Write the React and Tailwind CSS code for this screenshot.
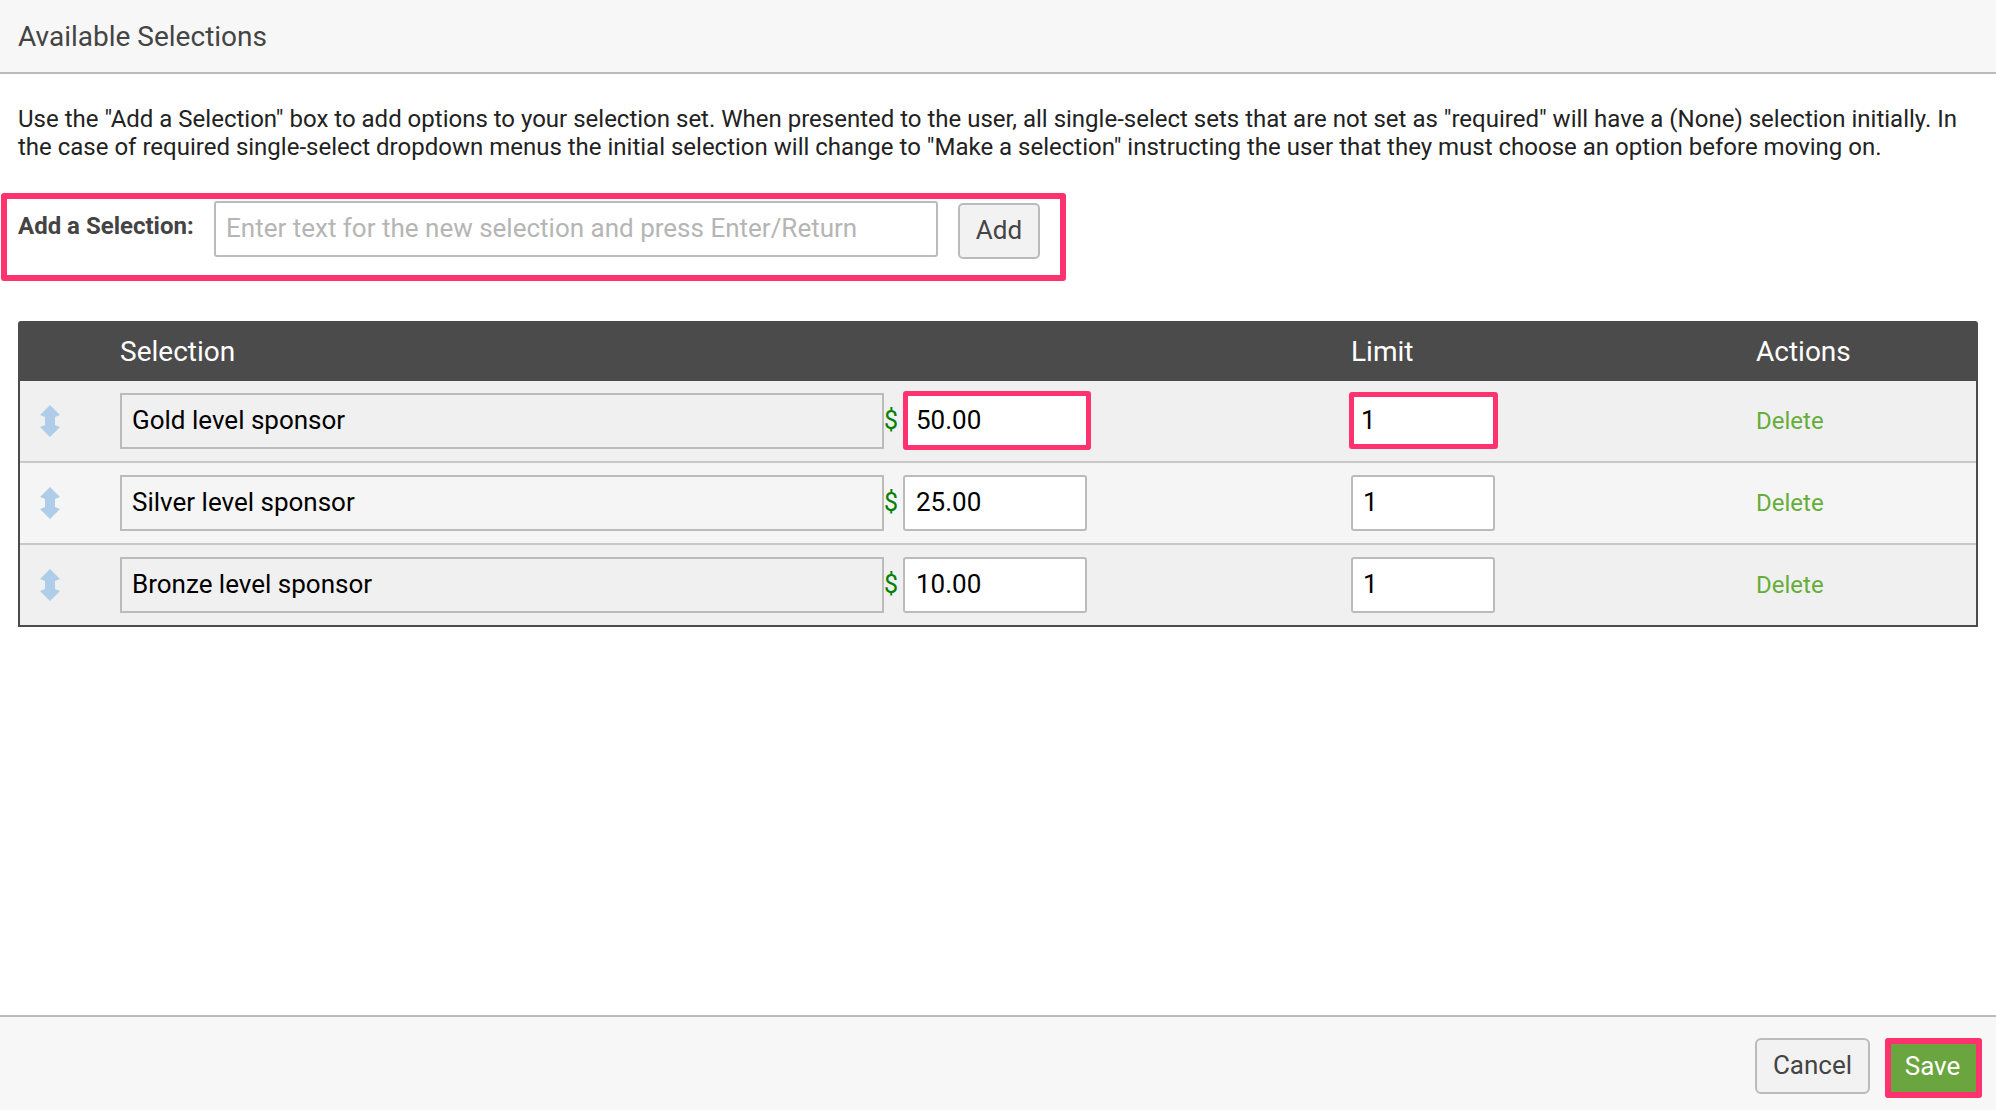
const rows = [
  { name: 'Gold level sponsor', price: '50.00', limit: '1', marked: true },
  { name: 'Silver level sponsor', price: '25.00', limit: '1' },
  { name: 'Bronze level sponsor', price: '10.00', limit: '1' },
]

function DragIcon() {
  return (
    <svg width="20" height="32" viewBox="0 0 20 32" className="blur-[0.5px]">
      <path d="M10 0 L20 10 L15 12 V20 L20 22 L10 32 L0 22 L5 20 V12 L0 10 Z" fill="#afcde8" />
    </svg>
  )
}

function Row({ row, odd }) {
  return (
    <div className={`grid grid-cols-[100px_1231px_405px_1fr] items-center h-[82px] border-b-2 border-[#c8c8c8] last:border-b-0 last:h-[80px] ${odd ? 'bg-[#f5f5f5]' : 'bg-[#f0f0f0]'}`}>
      <div className="pl-5 flex items-center"><DragIcon /></div>
      <div className="flex items-center h-full">
        <input
          readOnly
          defaultValue={row.name}
          className="w-[764px] h-[56px] border-2 border-[#bbbbbb] bg-transparent px-[10px] pb-[2px] text-[26px] text-black outline-none"
        />
        <span className="w-[19px] pr-[5px] text-center text-[25px] text-[#008000]">$</span>
        {row.marked ? (
          <input
            readOnly
            defaultValue={row.price}
            className="mb-[2px] w-[188px] h-[59px] border-[5px] border-[#ff3270] rounded-[3px] bg-white pl-[8px] pr-[7px] text-[26px] text-black outline-none"
          />
        ) : (
          <input
            readOnly
            defaultValue={row.price}
            className="w-[184px] h-[56px] border-2 border-[#bbbbbb] rounded-[3px] bg-white pl-[11px] pr-[10px] pb-[2px] text-[26px] text-black outline-none"
          />
        )}
      </div>
      <div className="flex items-center">
        {row.marked ? (
          <input
            readOnly
            defaultValue={row.limit}
            className="-ml-[2px] mb-[2px] w-[149px] h-[57px] border-[5px] border-[#ff3270] rounded-[3px] bg-white px-[7px] text-[26px] text-black outline-none"
          />
        ) : (
          <input
            readOnly
            defaultValue={row.limit}
            className="w-[144px] h-[56px] border-2 border-[#bbbbbb] rounded-[3px] bg-white px-[10px] pb-[2px] text-[26px] text-black outline-none"
          />
        )}
      </div>
      <a className="text-[24px] text-[#66ad3a]">Delete</a>
    </div>
  )
}

export default function App() {
  return (
    <div className="w-[1996px] h-[1110px] flex flex-col bg-white font-['Roboto',sans-serif]">
      <div className="h-[74px] shrink-0 flex items-center px-[18px] pt-[1px] bg-[#f7f7f7] border-b-2 border-[#bbbbbb]">
        <h2 className="text-[28px] text-[#444444]">Available Selections</h2>
      </div>

      <div className="flex-1 pt-[31px]">
        <p className="px-[18px] text-[24px] leading-[28px] text-[#222222]">
          Use the "Add a Selection" box to add options to your selection set. When presented to the user, all single-select sets that are not set as "required" will have a (None) selection initially. In the case of required single-select dropdown menus the initial selection will change to "Make a selection" instructing the user that they must choose an option before moving on.
        </p>

        <div className="ml-[1px] mt-[32px] w-[1065px] h-[88px] flex items-start gap-[20px] border-[6px] border-[#ff3270] rounded-[3px] pl-[11px] pt-[2px]">
          <label className="w-[176px] pt-[7px] text-[24px] font-bold text-[#444444] whitespace-nowrap">Add a Selection:</label>
          <input
            placeholder="Enter text for the new selection and press Enter/Return"
            className="w-[724px] h-[56px] border-2 border-[#bbbbbb] rounded-[3px] bg-white px-[10px] pb-[2px] text-[26px] outline-none placeholder:text-[#b5b5b5]"
          />
          <button className="mt-[2px] w-[82px] h-[56px] pb-[2px] border-2 border-[#bbbbbb] rounded-[5px] bg-[#f2f2f2] text-[26px] text-[#444444]">Add</button>
        </div>

        <div className="mx-[18px] mt-[40px] border-x-2 border-b-2 border-[#4b4b4b] rounded-t-[3px]">
          <div className="grid grid-cols-[100px_1231px_405px_1fr] items-center h-[60px] pt-[1px] bg-[#4b4b4b] text-[28px] text-white">
            <span />
            <span>Selection</span>
            <span>Limit</span>
            <span>Actions</span>
          </div>
          {rows.map((row, i) => (
            <Row key={row.name} row={row} odd={i % 2 === 1} />
          ))}
        </div>
      </div>

      <div className="h-[95px] shrink-0 flex items-start justify-end gap-[15px] pt-[21px] pr-[14px] bg-[#f7f7f7] border-t-2 border-[#bbbbbb]">
        <button className="w-[115px] h-[56px] pb-[2px] border-2 border-[#bbbbbb] rounded-[6px] bg-[#f2f2f2] text-[26px] text-[#444444]">Cancel</button>
        <button className="w-[97px] h-[60px] pb-[4px] pr-[2px] border-[6px] border-[#ff3270] rounded-[3px] bg-[#6aa53f] text-[26px] text-white">Save</button>
      </div>
    </div>
  )
}
